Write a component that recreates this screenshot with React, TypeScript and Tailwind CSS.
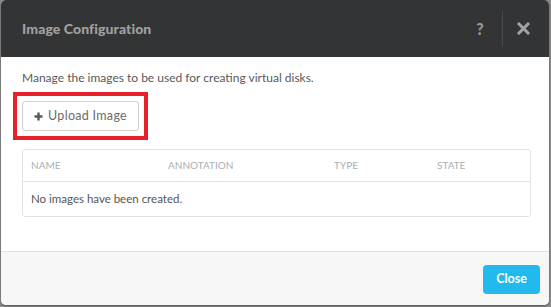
import React from 'react';

const App = () => {
  return (
    <div className="w-[551px] h-[307px] bg-[#8a8a8a] overflow-hidden" style={{ fontFamily: 'Lato, "Open Sans", sans-serif' }}>
      <div className="ml-[1px] w-[548px] h-[305px] rounded-[5px] overflow-hidden bg-white flex flex-col shadow-[0_1px_2px_rgba(0,0,0,0.4)]">
        {/* Header */}
        <div className="h-[57px] bg-[#333436] flex items-center pl-[21px] pr-[19px] shrink-0">
          <h1 className="text-[14px] font-black text-[#a0a0a0] tracking-[0.1px] flex-1 pb-[1px]">Image Configuration</h1>
          <span className="text-[16px] font-black text-[#9a9a9a] w-[12px] text-center mr-[1px]">?</span>
          <div className="w-px h-[36px] bg-[#48494b] ml-[15px] mr-[14px]" />
          <svg width="13" height="13" viewBox="0 0 13 13" className="text-[#a3a3a3]">
            <path d="M2 2 L11 11 M11 2 L2 11" stroke="currentColor" strokeWidth="3" strokeLinecap="square" />
          </svg>
        </div>

        {/* Body */}
        <div className="flex-1 px-[21px] pt-[13px]">
          <p className="text-[12px] text-[#595959] leading-[16px]">Manage the images to be used for creating virtual disks.</p>
          <div className="mt-[6px] ml-[-9px] w-[135px] h-[48px] border-[4px] border-[#e8202a] flex items-center pl-[5px]">
            <button className="h-[30px] w-[117px] border border-[#cfcfcf] rounded-[3px] bg-white flex items-center justify-center gap-[5px] text-[12.5px] text-[#6b6b6b] tracking-[0.3px]">
              <svg width="9" height="9" viewBox="0 0 9 9"><path d="M4.5 0.5 V8.5 M0.5 4.5 H8.5" stroke="#5a5a5a" strokeWidth="2.4" /></svg>
              Upload Image
            </button>
          </div>
          <div className="mt-[9px] w-[509px] border border-[#e3e3e3] rounded-[3px]">
            <div className="h-[32px] flex items-center px-[8px] text-[10px] text-[#a9afb5] border-b border-[#e3e3e3]">
              <span className="w-[137px]">NAME</span>
              <span className="w-[166px]">ANNOTATION</span>
              <span className="w-[103px]">TYPE</span>
              <span>STATE</span>
            </div>
            <div className="h-[34px] flex items-center px-[8px] text-[11.5px] text-[#555]">No images have been created.</div>
          </div>
        </div>

        {/* Footer */}
        <div className="h-[54px] bg-[#f7f7f7] border-t border-[#e2e2e2] flex items-center justify-end pr-[9px] shrink-0">
          <button className="w-[57px] h-[29px] rounded-[4px] bg-[#22b9ec] text-white text-[12.5px] font-bold mt-[1px]">Close</button>
        </div>
      </div>
    </div>
  );
};

export default App;
